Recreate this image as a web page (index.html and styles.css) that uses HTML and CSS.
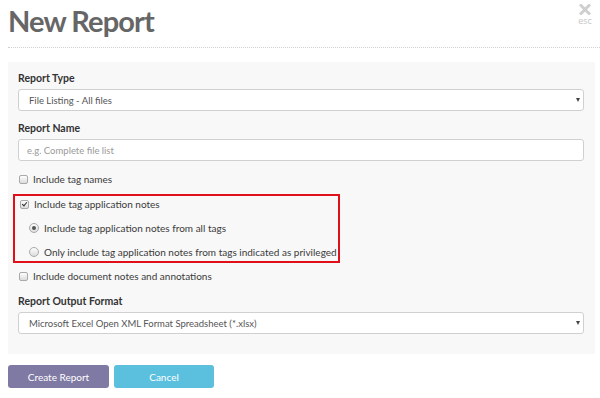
FILE: index.html
```html
<!DOCTYPE html>
<html lang="en">
<head>
    <meta charset="UTF-8">
    <title>New Report</title>
    <link rel="stylesheet" href="styles.css">
</head>
<body>
    <div class="modal-header">
        <h1>New Report</h1>
        <div class="close-btn">
            <svg width="12" height="11" viewBox="0 0 12 11">
                <path d="M2 1.5 L10 9.5 M10 1.5 L2 9.5" stroke="#cfcfcf" stroke-width="3" stroke-linecap="square"/>
            </svg>
            <span class="esc">esc</span>
        </div>
    </div>

    <form class="report-form">
        <label class="field-label">Report Type</label>
        <div class="select-wrap">
            <select class="form-control">
                <option>File Listing - All files</option>
            </select>
        </div>

        <label class="field-label spaced">Report Name</label>
        <input class="form-control text-input" type="text" placeholder="e.g. Complete file list">

        <label class="check-row first">
            <input type="checkbox"> Include tag names
        </label>

        <div class="highlight-box">
            <label class="check-row">
                <input type="checkbox" checked> Include tag application notes
            </label>
            <label class="check-row sub">
                <input type="radio" name="tagnotes" checked> Include tag application notes from all tags
            </label>
            <label class="check-row sub">
                <input type="radio" name="tagnotes"> Only include tag application notes from tags indicated as privileged
            </label>
        </div>

        <label class="check-row after-box">
            <input type="checkbox"> Include document notes and annotations
        </label>

        <label class="field-label spaced">Report Output Format</label>
        <div class="select-wrap">
            <select class="form-control">
                <option>Microsoft Excel Open XML Format Spreadsheet (*.xlsx)</option>
            </select>
        </div>
    </form>

    <div class="actions">
        <button class="btn btn-primary">Create Report</button>
        <button class="btn btn-info">Cancel</button>
    </div>
</body>
</html>
```

FILE: styles.css
```css
body {
    margin: 0;
    padding: 0 0 0 8px;
    font-family: Lato, "Open Sans", Arial, sans-serif;
    font-size: 10px;
    color: #333;
    background-color: #fff;
}
.modal-header {
    display: flex;
    justify-content: space-between;
    align-items: flex-start;
    height: 47px;
    border-bottom: 1px dotted #cfcfcf;
}
.modal-header h1 {
    margin: 0;
    padding-top: 3px;
    font-size: 29px;
    font-weight: 700;
    color: #666;
    letter-spacing: -0.9px;
    line-height: 36px;
}
.close-btn {
    display: flex;
    flex-direction: column;
    align-items: center;
    width: 22px;
    padding-top: 4px;
    margin-right: 4px;
}
.esc {
    font-family: "Open Sans", Arial, sans-serif;
    font-size: 9px;
    color: #c8c8c8;
    line-height: 10px;
    margin-top: 1px;
}
.report-form {
    margin: 14px 5px 0 0;
    padding: 8px 11px 20px 10px;
    background-color: #f8f8f8;
}
.field-label {
    display: block;
    font-size: 10.5px;
    font-weight: 700;
    color: #333;
    line-height: 16px;
    margin-bottom: 3px;
}
.field-label.spaced {
    margin-top: 9px;
}
.form-control {
    display: block;
    box-sizing: border-box;
    width: 100%;
    height: 22px;
    margin: 0;
    padding: 0 10px;
    border: 1px solid #d0d0d0;
    border-radius: 3px;
    background-color: #fff;
    font-family: Lato, Arial, sans-serif;
    font-size: 9.5px;
    color: #555;
    -webkit-appearance: none;
    appearance: none;
}
.text-input {
    padding-left: 8px;
}
.form-control::placeholder {
    color: #999;
}
.select-wrap {
    position: relative;
}
.select-wrap::after {
    content: "";
    position: absolute;
    right: 4px;
    top: 9px;
    border-left: 2.5px solid transparent;
    border-right: 2.5px solid transparent;
    border-top: 4px solid #444;
}
.check-row {
    display: flex;
    align-items: center;
    height: 16px;
    font-size: 10px;
    color: #3a3a3a;
    white-space: nowrap;
}
.check-row.first {
    margin-top: 10px;
}
.check-row input {
    -webkit-appearance: none;
    appearance: none;
    position: relative;
    flex-shrink: 0;
    box-sizing: border-box;
    width: 9px;
    height: 9px;
    margin: 0 5px 0 1px;
    border: 1px solid #a9a9a9;
    border-radius: 2px;
    background: linear-gradient(#fdfdfd, #dcdcdc);
}
.check-row input[type="checkbox"]:checked::after {
    content: "";
    position: absolute;
    left: 2px;
    top: 0;
    width: 2px;
    height: 4px;
    border: solid #333;
    border-width: 0 1.5px 1.5px 0;
    transform: rotate(40deg);
}
.check-row input[type="radio"] {
    border-radius: 50%;
    width: 10px;
    height: 10px;
}
.check-row input[type="radio"]:checked::after {
    content: "";
    position: absolute;
    left: 2px;
    top: 2px;
    width: 4px;
    height: 4px;
    border-radius: 50%;
    background: #555;
}
.check-row.sub {
    margin-top: 8px;
    padding-left: 9px;
}
.highlight-box {
    display: inline-block;
    margin: 7px 0 0 -5px;
    padding: 0 4px 1px 4px;
    border: 2px solid #e0101b;
    width: 315px;
}
.check-row.after-box {
    margin-top: 5px;
}
.actions {
    display: flex;
    gap: 5px;
    margin-top: 11px;
}
.btn {
    height: 23px;
    border: none;
    border-radius: 3px;
    font-family: Lato, Arial, sans-serif;
    font-size: 10px;
    color: #fff;
    padding: 0;
}
.btn-primary {
    width: 101px;
    background-color: #7f7aa3;
}
.btn-info {
    width: 100px;
    background-color: #5bc0de;
}
```
